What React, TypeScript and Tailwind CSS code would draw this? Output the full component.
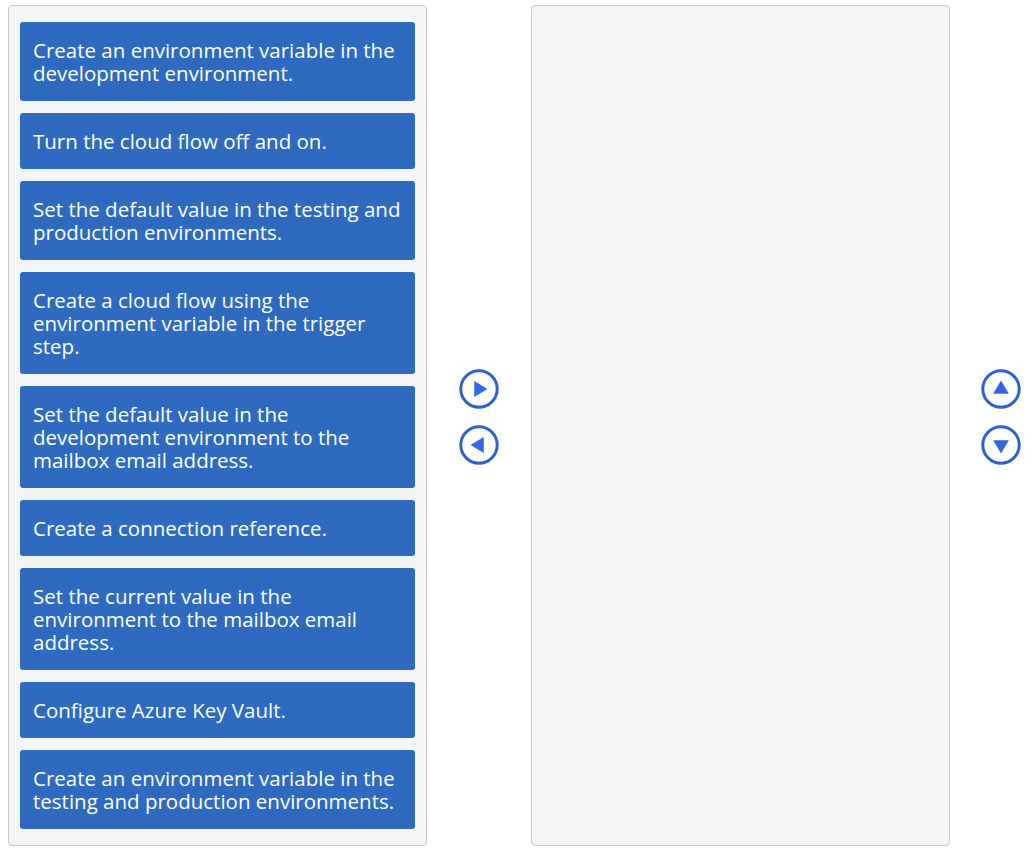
const steps = [
  "Create an environment variable in the development environment.",
  "Turn the cloud flow off and on.",
  "Set the default value in the testing and production environments.",
  "Create a cloud flow using the environment variable in the trigger step.",
  "Set the default value in the development environment to the mailbox email address.",
  "Create a connection reference.",
  "Set the current value in the environment to the mailbox email address.",
  "Configure Azure Key Vault.",
  "Create an environment variable in the testing and production environments.",
];

type Dir = "right" | "left" | "up" | "down";

const triangles: Record<Dir, string> = {
  right: "M14.5 11.5 L27 19 L14.5 26.5 Z",
  left: "M23.5 11.5 L11 19 L23.5 26.5 Z",
  up: "M11.5 23.5 L19 11 L26.5 23.5 Z",
  down: "M11.5 14.5 L19 27 L26.5 14.5 Z",
};

function ArrowButton({ dir }: { dir: Dir }) {
  return (
    <button className="w-[40px] h-[40px]" aria-label={dir}>
      <svg viewBox="0 0 38 38" width="40" height="40">
        <circle cx="19" cy="19" r="17.3" fill="white" stroke="#2d60d3" strokeWidth="2.8" />
        <path d={triangles[dir]} fill="#2f68e3" strokeLinejoin="round" />
      </svg>
    </button>
  );
}

export default function App() {
  return (
    <div className="flex bg-white pl-2 pt-[5px] h-[852px] font-['Open_Sans',sans-serif]">
      <div className="w-[419px] shrink-0 h-[841px] bg-[#f3f4f6] border border-[#c9c9c9] rounded-[4px] px-[11px] pt-4 flex flex-col gap-3">
        {steps.map((s) => (
          <div
            key={s}
            className="bg-[#2e6bc0] rounded-[3px] pl-[13px] pr-3 py-[16.5px] text-white text-[20.5px] leading-[23px]"
          >
            {s}
          </div>
        ))}
      </div>
      <div className="w-[104px] shrink-0 flex flex-col items-center pt-[364px] gap-[16px]">
        <ArrowButton dir="right" />
        <ArrowButton dir="left" />
      </div>
      <div className="w-[419px] shrink-0 h-[841px] bg-[#f3f4f6] border border-[#c9c9c9] rounded-[4px]" />
      <div className="w-[102px] shrink-0 flex flex-col items-center pt-[364px] gap-[16px]">
        <ArrowButton dir="up" />
        <ArrowButton dir="down" />
      </div>
    </div>
  );
}
